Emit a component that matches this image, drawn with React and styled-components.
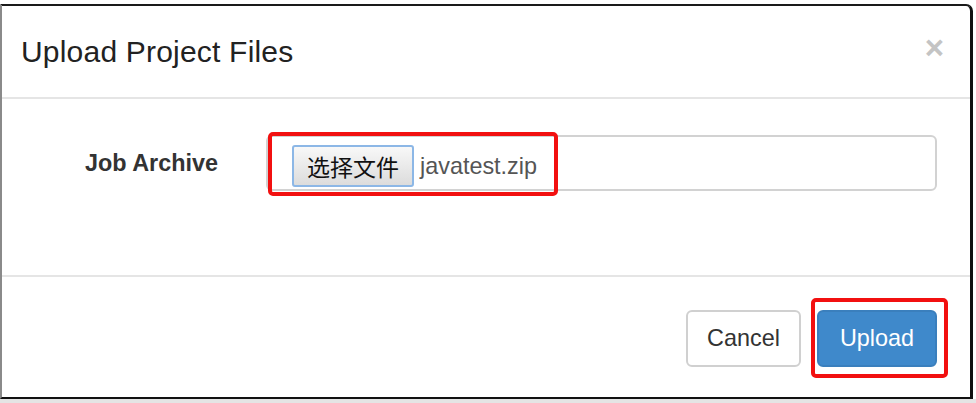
import React from "react";
import styled, { createGlobalStyle } from "styled-components";

const Global = createGlobalStyle`
  html, body { margin: 0; padding: 0; background: #fff; }
  body { font-family: "Liberation Sans", Arial, sans-serif; }
`;

const Page = styled.div`
  width: 976px;
  height: 403px;
  padding-top: 4px;
  box-sizing: border-box;
  background: linear-gradient(to bottom, #fff 0, #fff 399px, #e4e4e4 399px);
`;

const Modal = styled.div`
  width: 973px;
  height: 395px;
  box-sizing: border-box;
  border-top: 2px solid #1a1a1a;
  border-left: 2px solid #8a8a8a;
  border-right: 3px solid #111;
  border-bottom: 2px solid #111;
  border-top-right-radius: 7px;
  background: #fff;
  display: flex;
  flex-direction: column;
`;

const Header = styled.div`
  height: 93px;
  border-bottom: 2px solid #e5e5e5;
  display: flex;
  align-items: center;
  justify-content: space-between;
  padding: 0 26px 0 19px;
  box-sizing: border-box;
  flex: none;
`;

const Title = styled.h4`
  margin: 0;
  font-size: 30px;
  font-weight: normal;
  color: #222;
  letter-spacing: 0.2px;
`;

const Close = styled.button`
  border: 0;
  background: none;
  padding: 0;
  font-family: "Liberation Sans", Arial, sans-serif;
  font-size: 33px;
  font-weight: bold;
  color: #c4c4c4;
  line-height: 1;
  margin-top: -8px;
`;

const Body = styled.div`
  height: 176px;
  box-sizing: border-box;
  padding-top: 36px;
  padding-right: 33px;
  flex: none;
`;

const Row = styled.div`
  position: relative;
  display: flex;
  align-items: center;
`;

const Label = styled.label`
  width: 216px;
  text-align: right;
  font-weight: bold;
  font-size: 23.4px;
  color: #333;
  flex: none;
`;

const FileBox = styled.div`
  margin-left: 48px;
  flex: 1;
  height: 56px;
  box-sizing: border-box;
  border: 2px solid #d2d2d2;
  border-radius: 6px;
  display: flex;
  align-items: center;
  padding-left: 24px;
  padding-top: 6px;
  gap: 6px;
`;

const ChooseButton = styled.span`
  height: 42px;
  box-sizing: border-box;
  padding: 0 13px;
  display: inline-flex;
  align-items: center;
  border: 2px solid #8cb7e6;
  border-radius: 3px;
  background: linear-gradient(to bottom, #f8f8f8, #dcdcdc);
  font-family: "Noto Sans CJK SC", sans-serif;
  font-size: 23px;
  color: #111;
`;

const FileName = styled.span`
  font-size: 23.4px;
  color: #555;
`;

const Highlight = styled.div`
  position: absolute;
  border: 4px solid #f21010;
  border-radius: 5px;
  box-sizing: border-box;
  pointer-events: none;
`;

const Footer = styled.div`
  flex: 1;
  border-top: 2px solid #e5e5e5;
  display: flex;
  justify-content: flex-end;
  align-items: flex-start;
  padding: 33px 33px 0 0;
  gap: 16px;
  position: relative;
`;

const Button = styled.button`
  height: 57px;
  box-sizing: border-box;
  padding: 0 ${(p) => (p.$primary ? 21 : 19)}px;
  font-family: "Liberation Sans", Arial, sans-serif;
  font-size: 23.4px;
  border-radius: 6px;
  border: 2px solid ${(p) => (p.$primary ? "#3a7fbd" : "#d0d0d0")};
  background: ${(p) => (p.$primary ? "#3f89cb" : "#fff")};
  color: ${(p) => (p.$primary ? "#fff" : "#333")};
`;

export default function App() {
  return (
    <Page>
      <Global />
      <Modal>
        <Header>
          <Title>Upload Project Files</Title>
          <Close aria-label="close">×</Close>
        </Header>
        <Body>
          <Row>
            <Label>Job Archive</Label>
            <FileBox>
              <ChooseButton>选择文件</ChooseButton>
              <FileName>javatest.zip</FileName>
            </FileBox>
            <Highlight style={{ left: 266, top: -3, width: 290, height: 64 }} />
          </Row>
        </Body>
        <Footer>
          <Button>Cancel</Button>
          <Button $primary>Upload</Button>
          <Highlight style={{ right: 22, top: 21, width: 137, height: 80 }} />
        </Footer>
      </Modal>
    </Page>
  );
}
